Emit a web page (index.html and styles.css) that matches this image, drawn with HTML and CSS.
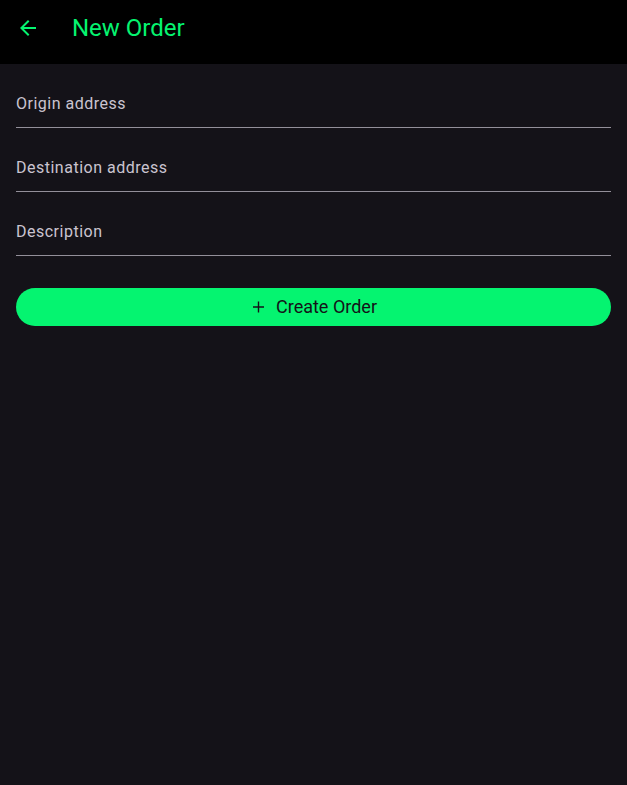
FILE: index.html
```html
<!DOCTYPE html>
<html lang="en">
<head>
<meta charset="utf-8">
<meta name="viewport" content="width=device-width, initial-scale=1">
<title>New Order</title>
<link rel="stylesheet" href="styles.css">
</head>
<body>
<header class="app-bar">
  <button class="back" type="button" aria-label="Back">
    <svg class="icon" viewBox="0 0 24 24" aria-hidden="true"><path d="M20 11H7.83l5.59-5.59L12 4l-8 8 8 8 1.41-1.41L7.83 13H20v-2z"/></svg>
  </button>
  <h1 class="title">New Order</h1>
</header>
<main>
  <form class="order-form">
    <input class="field" type="text" placeholder="Origin address" aria-label="Origin address">
    <input class="field" type="text" placeholder="Destination address" aria-label="Destination address">
    <input class="field" type="text" placeholder="Description" aria-label="Description">
    <button class="create" type="button">
      <svg class="plus" viewBox="0 0 18 18" aria-hidden="true"><path d="M7.8 3.5h1.4v4.8h4.8v1.4H9.2v4.8H7.8V9.7H3V8.3h4.8z"/></svg>
      <span>Create Order</span>
    </button>
  </form>
</main>
</body>
</html>
```
FILE: styles.css
```css
* {
  box-sizing: border-box;
}

body {
  margin: 0;
  min-height: 100vh;
  background: #141218;
  font-family: Roboto, sans-serif;
}

.app-bar {
  display: flex;
  align-items: center;
  height: 64px;
  padding: 0 4px 8px;
  background: #000;
  color: #05f470;
}

.back {
  display: grid;
  place-items: center;
  width: 48px;
  height: 48px;
  padding: 0;
  border: 0;
  border-radius: 50%;
  background: none;
  color: inherit;
}

.icon {
  width: 24px;
  height: 24px;
  fill: currentColor;
}

.title {
  margin: 0 0 0 20px;
  font-size: 24px;
  line-height: 32px;
  font-weight: 400;
}

.order-form {
  display: flex;
  flex-direction: column;
  gap: 16px;
  padding: 16px;
}

.field {
  width: 100%;
  height: 48px;
  padding: 0;
  border: 0;
  border-bottom: 1px solid #938f99;
  border-radius: 0;
  outline: 0;
  background: none;
  color: #e6e0e9;
  font: 16px/24px Roboto, sans-serif;
  letter-spacing: 0.5px;
}

.field::placeholder {
  color: #cac4d0;
  opacity: 1;
}

.create {
  display: flex;
  align-items: center;
  justify-content: center;
  gap: 8px;
  height: 38px;
  margin-top: 16px;
  padding: 0 16px;
  border: 0;
  border-radius: 19px;
  background: #05f470;
  color: #141218;
  font: 18px/24px Roboto, sans-serif;
}

.plus {
  width: 18px;
  height: 18px;
  fill: currentColor;
}
```
